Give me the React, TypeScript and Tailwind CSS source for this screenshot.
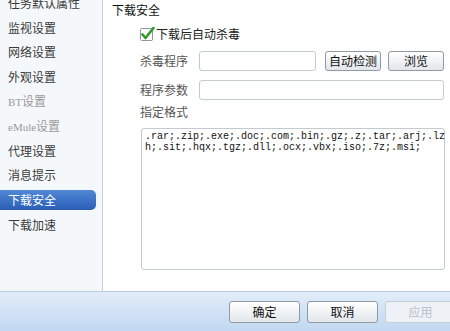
import React from 'react';

const font = { fontFamily: '"Noto Sans CJK SC", "Noto Sans", sans-serif' };

export default function App() {
  const items = [
    { label: '任务默认属性' },
    { label: '监视设置' },
    { label: '网络设置' },
    { label: '外观设置' },
    { label: 'BT设置', muted: true },
    { label: 'eMule设置', muted: true },
    { label: '代理设置' },
    { label: '消息提示' },
    { label: '下载安全', active: true },
    { label: '下载加速' },
  ];

  const btn =
    'h-[20px] rounded-[3px] border border-[#8f9aa6] bg-gradient-to-b from-white to-[#e2e6ea] text-[12px] text-[#111] flex items-center justify-center';

  return (
    <div className="w-[450px] h-[331px] overflow-hidden flex flex-col bg-white text-[12px] text-[#333]" style={font}>
      <div className="flex h-[291px]">
        <div className="w-[103px] shrink-0 bg-[#f5f8fb] border-r border-[#c9d1d9] overflow-hidden">
          <div className="mt-[-9px]">
            {items.map((it) => (
              <div key={it.label} className="h-[24.6px] flex items-center">
                <div
                  className={
                    it.active
                      ? 'w-[96px] h-[20px] flex items-center pl-[8px] rounded-r-[5px] bg-gradient-to-b from-[#5088d6] to-[#2b5db6] text-white'
                      : 'h-[20px] flex items-center pl-[8px] ' + (it.muted ? 'text-[#9a9a9a]' : 'text-[#3a3a3a]')
                  }
                >
                  {it.label === 'eMule设置' ? (
                    <span>
                      <span className="text-[11px]" style={{ fontFamily: '"Liberation Serif", serif' }}>eMule</span>设置
                    </span>
                  ) : it.label === 'BT设置' ? (
                    <span>
                      <span className="text-[11px]" style={{ fontFamily: '"Liberation Serif", serif' }}>BT</span>设置
                    </span>
                  ) : (
                    it.label
                  )}
                </div>
              </div>
            ))}
          </div>
        </div>

        <div className="flex-1 flex flex-col pb-[20px]">
          <div className="pl-[9px] mt-[3px] h-[14px] leading-[14px] text-[#111]">下载安全</div>

          <div className="flex items-center ml-[37px] mt-[10px] h-[14px]">
            <svg width="16" height="14" viewBox="0 0 16 14" className="shrink-0">
              <rect x="0.5" y="1.5" width="12" height="12" rx="1" fill="#fff" stroke="#8a98a6" />
              <path d="M2.5 7.5 L5.5 11 L13.5 1" fill="none" stroke="#2f9a2a" strokeWidth="2.6" strokeLinecap="round" strokeLinejoin="round" />
            </svg>
            <span className="leading-[14px] text-[#222]">下载后自动杀毒</span>
          </div>

          <div className="flex items-center ml-[37px] mt-[9px] h-[21px]">
            <span className="w-[59px] text-[#555]">杀毒程序</span>
            <div className="w-[117px] h-[20px] rounded-[3px] border border-[#c2cad2] bg-white" />
            <div className={btn + ' w-[56px] ml-[9px]'}>自动检测</div>
            <div className={btn + ' w-[56px] ml-[7px]'}>浏览</div>
          </div>

          <div className="flex items-center ml-[37px] mt-[8px] h-[21px]">
            <span className="w-[59px] text-[#555]">程序参数</span>
            <div className="w-[245px] h-[20px] rounded-[3px] border border-[#c2cad2] bg-white" />
          </div>

          <div className="ml-[37px] mt-[4px] h-[16px] leading-[16px] text-[#555]">指定格式</div>

          <div
            className="ml-[38px] mt-[8px] w-[304px] h-[142px] rounded-[3px] border border-[#c2cad2] bg-white px-[3px] pt-[2px] text-[10px] leading-[11px] text-[#111]"
            style={{ fontFamily: '"Liberation Mono", monospace' }}
          >
            <div>.rar;.zip;.exe;.doc;.com;.bin;.gz;.z;.tar;.arj;.lz</div>
            <div>h;.sit;.hqx;.tgz;.dll;.ocx;.vbx;.iso;.7z;.msi;</div>
          </div>
        </div>
      </div>

      <div className="flex-1 border-t border-[#b9cce2] bg-gradient-to-b from-[#e2edf9] to-[#c2d8f1] flex items-center pl-[229px] gap-[7px]">
        <div className="w-[71px] h-[22px] shrink-0 rounded-[3px] border border-[#8f9aa6] bg-gradient-to-b from-white to-[#e2e6ea] flex items-center justify-center text-[#111]">确定</div>
        <div className="w-[71px] h-[22px] shrink-0 rounded-[3px] border border-[#8f9aa6] bg-gradient-to-b from-white to-[#e2e6ea] flex items-center justify-center text-[#111]">取消</div>
        <div className="w-[71px] h-[22px] shrink-0 rounded-[3px] border border-[#c6ced7] bg-[#eef2f6] flex items-center justify-center text-[#b9c0c8]">应用</div>
      </div>
    </div>
  );
}
